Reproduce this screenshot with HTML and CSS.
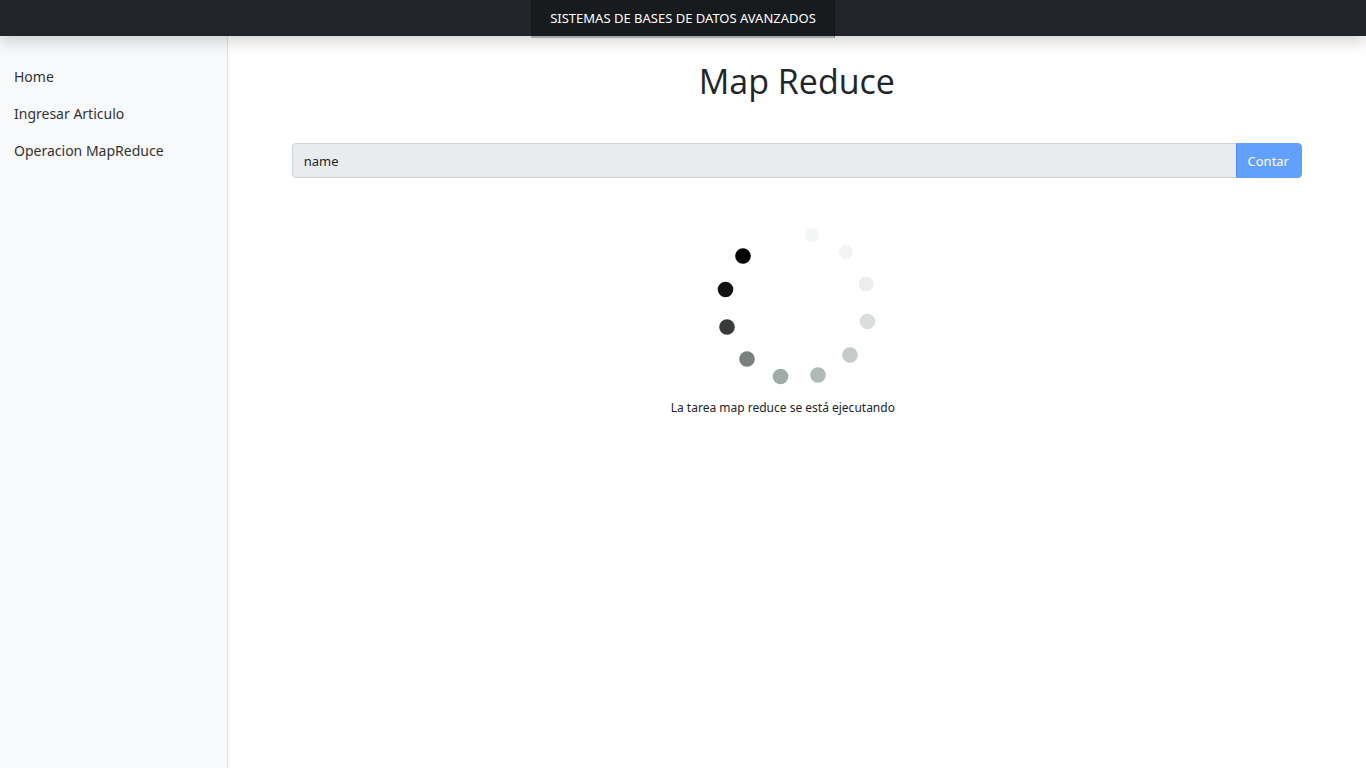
FILE: index.html
```html
<!DOCTYPE html>
<html lang="es">
<head>
  <meta charset="utf-8">
  <title>Map Reduce</title>
  <link rel="stylesheet" href="styles.css">
</head>
<body>
  <header class="navbar">
    <a class="brand" href="#">SISTEMAS DE BASES DE DATOS AVANZADOS</a>
  </header>
  <div class="layout">
    <nav class="sidebar">
      <a class="nav-link" href="#">Home</a>
      <a class="nav-link" href="#">Ingresar Articulo</a>
      <a class="nav-link" href="#">Operacion MapReduce</a>
    </nav>
    <main class="content">
      <h1 class="title">Map Reduce</h1>
      <form class="search">
        <input class="field" type="text" value="name" aria-label="Campo" disabled>
        <button class="submit" type="submit" disabled>Contar</button>
      </form>
      <div class="status" role="status">
        <svg class="spinner" viewBox="0 0 172 172" aria-hidden="true">
          <circle cx="101" cy="15" r="7" fill="#f1f7f7"/>
          <circle cx="135" cy="32" r="7" fill="#f2f4f4"/>
          <circle cx="155" cy="64" r="7.5" fill="#eceeee"/>
          <circle cx="156.5" cy="101.5" r="7.8" fill="#d9dddd"/>
          <circle cx="139" cy="135" r="7.8" fill="#c5cbca"/>
          <circle cx="107" cy="155" r="7.8" fill="#b1bab8"/>
          <circle cx="69.5" cy="156.5" r="7.8" fill="#a0aaa8"/>
          <circle cx="36" cy="139" r="7.8" fill="#788180"/>
          <circle cx="16" cy="107" r="7.8" fill="#393b3a"/>
          <circle cx="14.5" cy="69.5" r="7.8" fill="#111"/>
          <circle cx="32" cy="36" r="7.8" fill="#000"/>
        </svg>
        <p class="message">La tarea map reduce se está ejecutando</p>
      </div>
    </main>
  </div>
</body>
</html>
```
FILE: styles.css
```css
* {
  box-sizing: border-box;
}

body {
  margin: 0;
  min-height: 100vh;
  display: flex;
  flex-direction: column;
  background: #fff;
  color: #212529;
  font-family: "Segoe UI", "Noto Sans", sans-serif;
  font-size: 14px;
  line-height: 21px;
}

.navbar {
  position: relative;
  z-index: 1;
  height: 36px;
  display: flex;
  justify-content: center;
  align-items: flex-start;
  background: #212529;
  box-shadow: 0 7px 14px rgba(0, 0, 0, 0.15);
}

.brand {
  padding: 8px 19px 9px;
  background: rgba(0, 0, 0, 0.25);
  box-shadow: inset -1px 0 0 rgba(0, 0, 0, 0.25);
  color: #fff;
  font-size: 13px;
  text-decoration: none;
}

.layout {
  flex: 1;
  display: grid;
  grid-template-columns: 1fr 5fr;
}

.sidebar {
  padding-top: 22px;
  background: #f8f9fa;
  border-right: 1px solid #dee2e6;
}

.nav-link {
  display: block;
  padding: 8px 14px;
  color: #333;
  text-decoration: none;
}

.content {
  padding: 24px 64px;
}

.title {
  margin: 0 0 41px;
  font-family: "Segoe UI", "Open Sans", sans-serif;
  font-size: 34px;
  font-weight: 400;
  line-height: 42px;
  text-align: center;
}

.search {
  display: flex;
  height: 35px;
}

.field {
  flex: 1;
  min-width: 0;
  padding: 1px 11px 0;
  border: 1px solid #ced4da;
  border-radius: 4px 0 0 4px;
  background: #e9ecef;
  color: #212529;
  font: inherit;
  font-size: 13px;
}

.submit {
  margin-left: -1px;
  padding: 1px 12px 0 11px;
  border: 1px solid #0d6efd;
  border-radius: 0 4px 4px 0;
  background: #0d6efd;
  color: #fff;
  font: inherit;
  font-size: 13px;
  opacity: 0.65;
}

.status {
  display: flex;
  flex-direction: column;
  align-items: center;
  padding-top: 42px;
}

.spinner {
  width: 172px;
}

.message {
  margin: 5px 0 0;
  padding-right: 28px;
  font-size: 12px;
}
```
